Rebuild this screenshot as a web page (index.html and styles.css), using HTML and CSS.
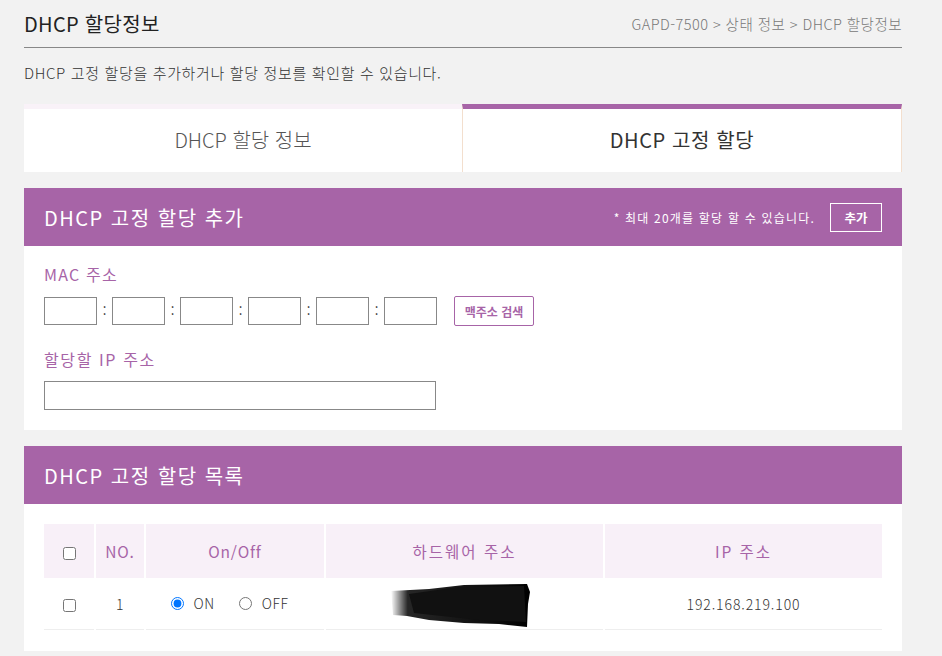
FILE: index.html
```html
<!DOCTYPE html>
<html lang="ko">
<head>
<meta charset="utf-8">
<title>DHCP 할당정보</title>
<link rel="stylesheet" href="styles.css">
</head>
<body>
<div class="page">
  <div class="top">
    <h1 class="title">DHCP 할당정보</h1>
    <div class="crumb">GAPD-7500 &gt; 상태 정보 &gt; DHCP 할당정보</div>
  </div>
  <p class="desc">DHCP 고정 할당을 추가하거나 할당 정보를 확인할 수 있습니다.</p>

  <div class="tabs">
    <div class="tab">DHCP 할당 정보</div>
    <div class="tab active">DHCP 고정 할당</div>
  </div>

  <section class="section">
    <div class="sec-head">
      <h2 class="sec-title">DHCP 고정 할당 추가</h2>
      <div class="sec-tools">
        <span class="note">* 최대 20개를 할당 할 수 있습니다.</span>
        <button class="btn-add">추가</button>
      </div>
    </div>
    <div class="sec-body form-body">
      <div class="label">MAC 주소</div>
      <div class="mac-row">
        <input class="mac" type="text"><span class="colon">:</span>
        <input class="mac" type="text"><span class="colon">:</span>
        <input class="mac" type="text"><span class="colon">:</span>
        <input class="mac" type="text"><span class="colon">:</span>
        <input class="mac" type="text"><span class="colon">:</span>
        <input class="mac" type="text">
        <button class="btn-search">맥주소 검색</button>
      </div>
      <div class="label label-ip">할당할 IP 주소</div>
      <input class="ip" type="text">
    </div>
  </section>

  <section class="section">
    <div class="sec-head">
      <h2 class="sec-title">DHCP 고정 할당 목록</h2>
    </div>
    <div class="sec-body list-body">
      <table class="list">
        <colgroup>
          <col class="c-chk"><col class="c-no"><col class="c-onoff"><col class="c-hw"><col class="c-ip">
        </colgroup>
        <thead>
          <tr>
            <th><input type="checkbox"></th>
            <th class="th-latin">NO.</th>
            <th class="th-latin">On/Off</th>
            <th>하드웨어 주소</th>
            <th>IP 주소</th>
          </tr>
        </thead>
        <tbody>
          <tr>
            <td><input type="checkbox"></td>
            <td>1</td>
            <td class="onoff">
              <label class="radio"><input type="radio" name="onoff1" checked> ON</label>
              <label class="radio"><input type="radio" name="onoff1"> OFF</label>
            </td>
            <td class="hw">
              <svg class="redact" width="145" height="46" viewBox="0 0 145 46" aria-hidden="true">
                <defs>
                  <linearGradient id="fade" x1="0" x2="1" y1="0" y2="0">
                    <stop offset="0" stop-color="#000" stop-opacity="0"/>
                    <stop offset="0.12" stop-color="#000" stop-opacity="0.85"/>
                    <stop offset="1" stop-color="#000" stop-opacity="1"/>
                  </linearGradient>
                </defs>
                <path d="M2 9 L40 7 L75 3 L138 2 L141 10 L139 22 L138 45 L110 42 L75 41 L40 38 L18 34 L4 33 Z" fill="url(#fade)"/>
                <path d="M20 12 L70 5 L135 4 L137 40 L90 38 L25 31 Z" fill="#111"/>
              </svg>
            </td>
            <td class="ipval">192.168.219.100</td>
          </tr>
        </tbody>
      </table>
    </div>
  </section>
</div>
</body>
</html>
```

FILE: styles.css
```css
* { box-sizing: border-box; }

html, body {
  margin: 0;
  padding: 0;
  background: #f2f2f2;
}

body {
  font-family: "Noto Sans CJK KR", "Noto Sans", sans-serif;
  font-weight: 300;
  color: #333;
}

.page {
  padding: 0 40px 10px 24px;
}

.top {
  display: flex;
  justify-content: space-between;
  align-items: center;
  height: 48px;
  border-bottom: 1px solid #888;
}

.title {
  margin: 0;
  font-size: 20px;
  font-weight: 400;
  line-height: 28px;
  color: #222;
  letter-spacing: 0.3px;
}

.crumb {
  font-size: 14.5px;
  line-height: 20px;
  color: #777;
  letter-spacing: 0.45px;
}

.desc {
  margin: 14px 0 0;
  font-size: 15px;
  line-height: 22px;
  color: #333;
  letter-spacing: 0.65px;
}

.tabs {
  display: flex;
  margin-top: 20px;
  height: 68px;
}

.tab {
  flex: 1;
  display: flex;
  align-items: center;
  justify-content: center;
  background: #fff;
  border-top: 5px solid #f9f2f8;
  font-size: 20px;
  color: #555;
  padding-bottom: 3px;
}

.tab.active {
  border-top-color: #a764a7;
  border-left: 1px solid #f3dfce;
  border-right: 1px solid #f3dfce;
  color: #333;
  font-weight: 400;
  letter-spacing: 0.6px;
}

.section {
  margin-top: 16px;
}

.sec-head {
  display: flex;
  align-items: center;
  justify-content: space-between;
  height: 58px;
  padding: 0 20px;
  background: #a764a7;
  color: #fff;
}

.sec-title {
  margin: 0;
  font-size: 20px;
  font-weight: 400;
  letter-spacing: 1.5px;
}

.sec-tools {
  display: flex;
  align-items: center;
  gap: 15px;
}

.note {
  font-size: 12px;
  font-weight: 400;
  letter-spacing: 1.2px;
}

.btn-add {
  width: 52px;
  height: 29px;
  border: 1px solid #fff;
  background: transparent;
  color: #fff;
  font-family: inherit;
  font-size: 12.5px;
  font-weight: 700;
  padding: 0;
  cursor: pointer;
}

.sec-body {
  background: #fff;
  padding: 0 20px;
}

.form-body {
  padding-top: 16px;
  padding-bottom: 20px;
}

.label {
  font-size: 16px;
  line-height: 24px;
  color: #a764a7;
  font-weight: 400;
  letter-spacing: 1.2px;
}

.label-ip {
  margin-top: 21px;
  letter-spacing: 1.6px;
}

.mac-row {
  display: flex;
  align-items: center;
  margin-top: 10px;
  height: 30px;
}

.mac {
  width: 53px;
  height: 28px;
  border: 1px solid #888;
  margin: 0;
  padding: 0 4px;
  background: #fff;
}

.colon {
  width: 15px;
  text-align: center;
  font-size: 13px;
  font-weight: 400;
  line-height: 28px;
  color: #222;
}

.btn-search {
  margin-left: 17px;
  width: 80px;
  height: 30px;
  border: 1px solid #a764a7;
  border-radius: 2px;
  background: #fff;
  color: #a764a7;
  font-family: inherit;
  font-size: 12px;
  font-weight: 700;
  padding: 0;
}

.ip {
  display: block;
  margin-top: 10px;
  width: 392px;
  height: 29px;
  border: 1px solid #888;
  background: #fff;
}

.list-body {
  padding-top: 20px;
  padding-bottom: 21px;
}

.list {
  width: calc(100% + 4px);
  margin-left: -2px;
  border-collapse: separate;
  border-spacing: 2px 0;
  table-layout: fixed;
}

.c-chk { width: 50px; }
.c-no { width: 48px; }
.c-onoff { width: 178px; }

.list th {
  height: 54px;
  background: #f8f0f8;
  color: #a764a7;
  font-size: 15.5px;
  font-weight: 400;
  letter-spacing: 2px;
  text-align: center;
}

.list th.th-latin {
  letter-spacing: 0.8px;
}

.list td {
  height: 51px;
  border-bottom: 1px solid #eee;
  text-align: center;
  font-size: 14px;
  color: #333;
  letter-spacing: 0.3px;
}

.list td.ipval {
  letter-spacing: 0.9px;
}

.list input[type="checkbox"] {
  width: 13px;
  height: 13px;
  margin: 0;
  vertical-align: middle;
}

.onoff {
  padding-right: 12px;
}

.radio {
  display: inline-flex;
  align-items: center;
  gap: 10px;
  font-size: 14px;
  color: #333;
  letter-spacing: 0.5px;
}

.radio + .radio {
  margin-left: 20px;
}

.radio input {
  margin: 0;
  width: 13px;
  height: 13px;
}

.hw {
  padding-right: 8px;
}

.redact {
  display: inline-block;
  vertical-align: middle;
  margin-top: 3px;
}
```
